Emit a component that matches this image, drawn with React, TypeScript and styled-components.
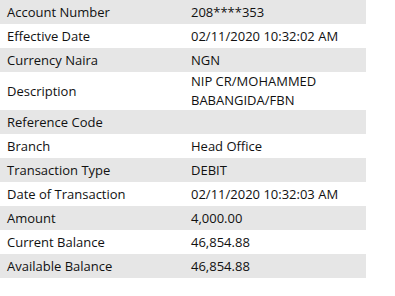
import React from 'react'
import styled, { createGlobalStyle } from 'styled-components'

const GlobalStyle = createGlobalStyle`
	body {
		margin: 0;
		background: #ffffff;
		font-family: 'Open Sans', 'Liberation Sans', sans-serif;
	}
`

const Table = styled.div`
	display: flex;
	flex-direction: column;
	width: 366px;
	color: #111111;
	font-size: 13px;
`

const Row = styled.div<{ $shaded: boolean; $tall?: boolean }>`
	display: grid;
	grid-template-columns: 184px 182px;
	align-items: center;
	height: ${p => (p.$tall ? 38 : 24)}px;
	background: ${p => (p.$shaded ? '#e6e6e6' : '#ffffff')};
`

const Cell = styled.div`
	padding-left: 7px;
	line-height: 19px;
	white-space: pre-line;
`

const rows: [string, string][] = [
	['Account Number', '208****353'],
	['Effective Date', '02/11/2020 10:32:02 AM'],
	['Currency Naira', 'NGN'],
	['Description', 'NIP CR/MOHAMMED\nBABANGIDA/FBN'],
	['Reference Code', ''],
	['Branch', 'Head Office'],
	['Transaction Type', 'DEBIT'],
	['Date of Transaction', '02/11/2020 10:32:03 AM'],
	['Amount', '4,000.00'],
	['Current Balance', '46,854.88'],
	['Available Balance', '46,854.88'],
]

export const App = () => (
	<>
		<GlobalStyle />
		<Table>
			{rows.map(([label, value], i) => (
				<Row key={label} $shaded={i % 2 === 0} $tall={value.includes('\n')}>
					<Cell>{label}</Cell>
					<Cell>{value}</Cell>
				</Row>
			))}
		</Table>
	</>
)

export default App
